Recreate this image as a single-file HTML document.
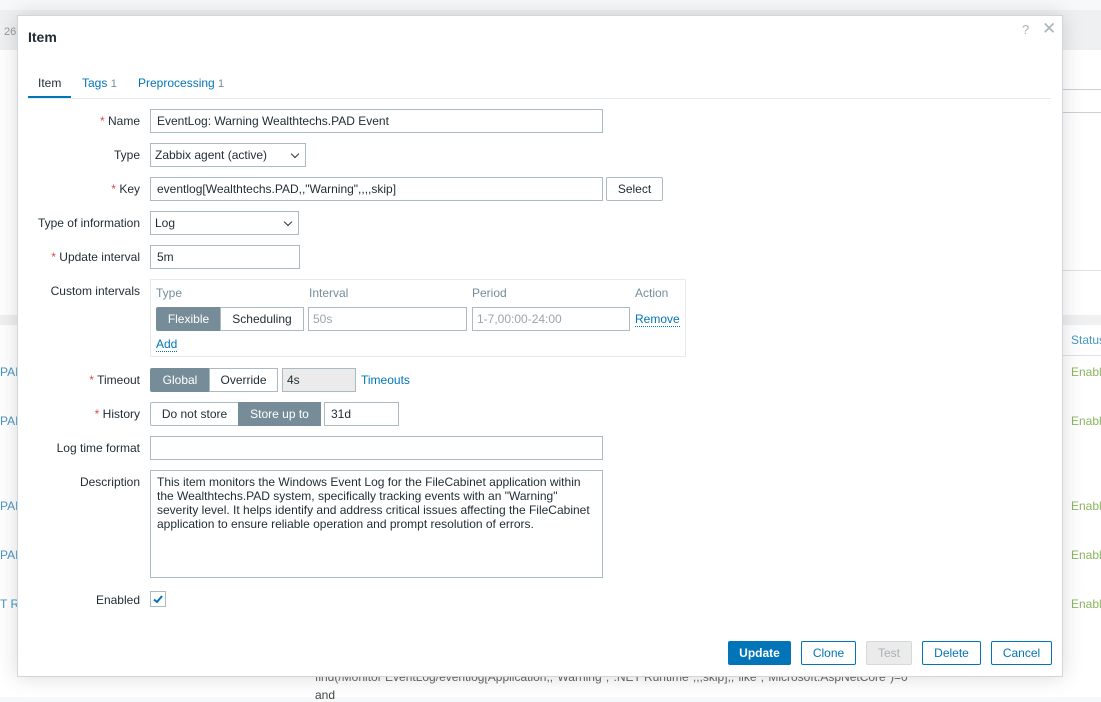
<!DOCTYPE html>
<html><head><style>
*{box-sizing:border-box;margin:0;padding:0}
body{width:1101px;height:697px;overflow:hidden;position:relative;background:#f7f8f9;font-family:"Liberation Sans",Arial,sans-serif;font-size:12px;color:#1f2c33}
.a{position:absolute}
.bg{background:#fff}
.lbl{position:absolute;right:961px;text-align:right;white-space:nowrap;font-size:12px;color:#1f2c33}
.req:before{content:"* ";color:#d64e4e}
.in{position:absolute;height:24px;border:1px solid #acbbc2;background:#fff;padding:0 6px;line-height:22px;white-space:nowrap;font-size:12px}
.chev{position:absolute;right:7px;top:7px;width:6px;height:6px;border-right:1.5px solid #333;border-bottom:1.5px solid #333;transform:rotate(45deg)}
.seg{position:absolute;height:24px;border:1px solid #acbbc2;line-height:22px;text-align:center;font-size:12px;background:#fff}
.on{background:#768d99;color:#fff;border-color:#768d99}
.lnk{color:#0275b8}
.btn{position:absolute;top:641px;height:24px;border:1px solid #0275b8;color:#0275b8;background:#fff;text-align:center;line-height:22px;border-radius:2px}
</style></head><body>
<!-- background page -->
<div class="a" style="left:0;top:10px;width:1101px;height:40px;background:#eef0f2"></div>
<div class="a" style="left:4px;top:26px;color:#999;font-size:11px">26</div>
<div class="a bg" style="left:0;top:50px;width:1101px;height:265px"></div>
<div class="a" style="left:1062px;top:89px;width:39px;height:1px;background:#c9d1d6"></div>
<div class="a" style="left:1062px;top:112px;width:39px;height:1px;background:#c9d1d6"></div>
<div class="a" style="left:1062px;top:270px;width:39px;height:1px;background:#dde3e6"></div>
<div class="a" style="left:0;top:315px;width:1101px;height:10px;background:#eef0f2"></div>
<div class="a bg" style="left:0;top:325px;width:1101px;height:372px"></div>
<div class="a" style="left:1062px;top:355px;width:39px;height:1px;background:#dde3e6"></div>
<div class="a" style="left:1071px;top:333px;color:#4796c4">Status</div>
<div class="a" style="left:1071px;top:365px;color:#8db560">Enabl</div>
<div class="a" style="left:1071px;top:414px;color:#8db560">Enabl</div>
<div class="a" style="left:1071px;top:499px;color:#8db560">Enabl</div>
<div class="a" style="left:1071px;top:548px;color:#8db560">Enabl</div>
<div class="a" style="left:1071px;top:597px;color:#8db560">Enabl</div>
<div class="a" style="left:0;top:365px;color:#4796c4">PAI</div>
<div class="a" style="left:0;top:414px;color:#4796c4">PAI</div>
<div class="a" style="left:0;top:499px;color:#4796c4">PAI</div>
<div class="a" style="left:0;top:548px;color:#4796c4">PAI</div>
<div class="a" style="left:0;top:597px;color:#4796c4">T R</div>
<div class="a" style="left:315px;top:670px;color:#666;white-space:nowrap">find(/Monitor EventLog/eventlog[Application,,"Warning",".NET Runtime",,,skip],,"like","Microsoft.AspNetCore")=0</div>
<div class="a" style="left:315px;top:688px;color:#444">and</div>
<!-- dialog -->
<div class="a bg" style="left:17px;top:15px;width:1046px;height:662px;border:1px solid #d0d6da;box-shadow:0 0 20px rgba(0,0,0,.15)"></div>
<div class="a" style="left:28px;top:29px;font-size:14px;font-weight:bold;color:#1f2c33">Item</div>
<div class="a" style="left:1022px;top:22px;color:#aab5bb;font-size:13px">?</div>
<div class="a" style="left:1042px;top:19px;color:#aab5bb;font-size:17px">✕</div>
<div class="a" style="left:38px;top:76px">Item</div>
<div class="a" style="left:28px;top:96px;width:43px;height:3px;background:#0275b8"></div>
<div class="a" style="left:28px;top:98px;width:1023px;height:1px;background:#e6eaec"></div>
<div class="a lnk" style="left:82px;top:76px">Tags <span style="color:#768d99;font-size:11px">1</span></div>
<div class="a lnk" style="left:138px;top:76px">Preprocessing <span style="color:#768d99;font-size:11px">1</span></div>

<div class="lbl req" style="top:114px">Name</div>
<div class="in" style="left:150px;top:109px;width:453px">EventLog: Warning Wealthtechs.PAD Event</div>
<div class="lbl" style="top:148px">Type</div>
<div class="in" style="left:150px;top:143px;width:156px;padding-left:4px">Zabbix agent (active)<span class="chev"></span></div>
<div class="lbl req" style="top:182px">Key</div>
<div class="in" style="left:150px;top:177px;width:453px">eventlog[Wealthtechs.PAD,,"Warning",,,,skip]</div>
<div class="seg" style="left:606px;top:177px;width:57px;border-radius:2px">Select</div>
<div class="lbl" style="top:216px">Type of information</div>
<div class="in" style="left:150px;top:211px;width:149px;padding-left:4px">Log<span class="chev"></span></div>
<div class="lbl req" style="top:250px">Update interval</div>
<div class="in" style="left:150px;top:245px;width:150px">5m</div>
<div class="lbl" style="top:284px">Custom intervals</div>
<div class="a" style="left:150px;top:279px;width:536px;height:78px;border:1px solid #e6eaec"></div>
<div class="a" style="left:156px;top:286px;color:#768d99">Type</div>
<div class="a" style="left:309px;top:286px;color:#768d99">Interval</div>
<div class="a" style="left:472px;top:286px;color:#768d99">Period</div>
<div class="a" style="left:635px;top:286px;color:#768d99">Action</div>
<div class="seg on" style="left:156px;top:307px;width:65px;border-radius:2px 0 0 2px">Flexible</div>
<div class="seg" style="left:220px;top:307px;width:84px">Scheduling</div>
<div class="in" style="left:308px;top:307px;width:159px;color:#9aa5ab;padding-left:4px">50s</div>
<div class="in" style="left:472px;top:307px;width:158px;color:#9aa5ab;padding-left:4px">1-7,00:00-24:00</div>
<div class="a lnk" style="left:635px;top:312px;border-bottom:1px dotted #0275b8">Remove</div>
<div class="a lnk" style="left:156px;top:337px;border-bottom:1px dotted #0275b8">Add</div>

<div class="lbl req" style="top:373px">Timeout</div>
<div class="seg on" style="left:150px;top:368px;width:60px;border-radius:2px 0 0 2px">Global</div>
<div class="seg" style="left:209px;top:368px;width:69px">Override</div>
<div class="in" style="left:282px;top:368px;width:74px;background:#ebebeb;padding-left:4px">4s</div>
<div class="a lnk" style="left:361px;top:373px">Timeouts</div>
<div class="lbl req" style="top:407px">History</div>
<div class="seg" style="left:150px;top:402px;width:89px;border-radius:2px 0 0 2px">Do not store</div>
<div class="seg on" style="left:238px;top:402px;width:83px">Store up to</div>
<div class="in" style="left:324px;top:402px;width:75px">31d</div>
<div class="lbl" style="top:441px">Log time format</div>
<div class="in" style="left:150px;top:436px;width:453px"></div>
<div class="lbl" style="top:475px">Description</div>
<div class="in" style="left:150px;top:470px;width:453px;height:108px;white-space:normal;line-height:14px;padding-top:4px">This item monitors the Windows Event Log for the FileCabinet application within the Wealthtechs.PAD system, specifically tracking events with an "Warning" severity level. It helps identify and address critical issues affecting the FileCabinet application to ensure reliable operation and prompt resolution of errors.</div>
<div class="lbl" style="top:593px">Enabled</div>
<div class="a" style="left:150px;top:591px;width:16px;height:16px;border:1px solid #acbbc2;background:#fff"></div>
<svg class="a" style="left:150px;top:591px" width="16" height="16"><path d="M4 8.5 L7 11 L12 5" stroke="#0275b8" stroke-width="2" fill="none"/></svg>

<div class="btn" style="left:728px;width:63px;background:#0275b8;color:#fff;font-weight:bold">Update</div>
<div class="btn" style="left:801px;width:55px">Clone</div>
<div class="btn" style="left:866px;width:46px;border-color:#d5d9db;background:#ebebeb;color:#a9b1b5">Test</div>
<div class="btn" style="left:922px;width:59px">Delete</div>
<div class="btn" style="left:991px;width:61px">Cancel</div>
</body></html>
